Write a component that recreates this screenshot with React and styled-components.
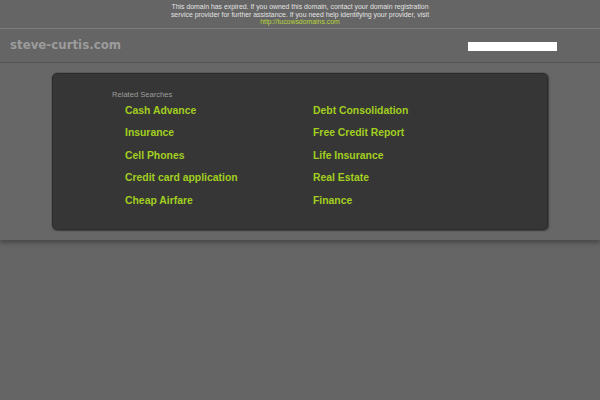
import React from 'react';
import styled, { createGlobalStyle } from 'styled-components';

const GlobalStyle = createGlobalStyle`
  html, body {
    margin: 0;
    padding: 0;
    background: #656565;
  }
`;

const Page = styled.div`
  width: 600px;
  height: 400px;
  overflow: hidden;
  font-family: "Liberation Sans", Arial, sans-serif;
  background: #656565;
`;

const Notice = styled.div`
  height: 29px;
  box-sizing: border-box;
  padding-top: 3px;
  text-align: center;
  font-size: 6.9px;
  line-height: 7.5px;
  color: #e2e2e2;
  border-bottom: 1px solid #7d7d7d;

  p {
    margin: 0 auto;
    width: 280px;
  }

  a {
    color: #b6d437;
    text-decoration: none;
  }
`;

const Header = styled.div`
  height: 33px;
  display: flex;
  align-items: center;
  justify-content: space-between;
  padding: 0 43px 0 10px;
  border-bottom: 1px solid #585858;
  box-shadow: 0 1px 0 #727272;
`;

const Logo = styled.div`
  font-family: "DejaVu Sans", Verdana, sans-serif;
  font-weight: bold;
  font-size: 11.8px;
  color: #9c9c9c;
  margin-top: -1px;
`;

const SearchBox = styled.input`
  width: 89px;
  height: 9px;
  box-sizing: border-box;
  border: none;
  padding: 0;
  background: #fff;
  margin-top: 2px;
`;

const Band = styled.div`
  padding: 10px 52px 10px;
  background: #676767;
  box-shadow: 0 3px 4px rgba(0, 0, 0, 0.28);
`;

const Panel = styled.div`
  height: 157px;
  box-sizing: border-box;
  background: #363636;
  border: 1px solid #2c2c2c;
  border-radius: 5px;
  box-shadow: 1px 1px 2px rgba(0, 0, 0, 0.35), 0 0 0 1px #5c5c5c;
  padding: 16px 0 0 59px;
`;

const Heading = styled.div`
  font-size: 7.6px;
  line-height: 10px;
  color: #9d9d9d;
  margin-bottom: 4px;
`;

const LinkGrid = styled.div`
  display: grid;
  grid-template-columns: 188px 188px;
  grid-auto-rows: 22.4px;
  padding-left: 13px;
`;

const Link = styled.a`
  font-size: 10.4px;
  font-weight: bold;
  line-height: 14px;
  color: #a2cf1f;
  text-decoration: none;
`;

const links = [
  'Cash Advance',
  'Debt Consolidation',
  'Insurance',
  'Free Credit Report',
  'Cell Phones',
  'Life Insurance',
  'Credit card application',
  'Real Estate',
  'Cheap Airfare',
  'Finance',
];

export default function App() {
  return (
    <Page>
      <GlobalStyle />
      <Notice>
        <p>
          This domain has expired. If you owned this domain, contact your domain registration
          service provider for further assistance. If you need help identifying your provider, visit
          <br />
          <a href="#">http://tucowsdomains.com</a>
        </p>
      </Notice>
      <Header>
        <Logo>steve-curtis.com</Logo>
        <SearchBox type="text" />
      </Header>
      <Band>
        <Panel>
          <Heading>Related Searches</Heading>
          <LinkGrid>
            {links.map((l) => (
              <Link key={l} href="#">{l}</Link>
            ))}
          </LinkGrid>
        </Panel>
      </Band>
    </Page>
  );
}
